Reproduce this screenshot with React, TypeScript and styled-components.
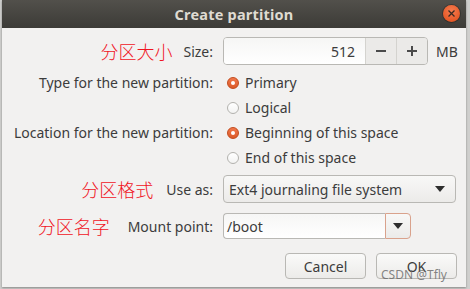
import React from "react";
import styled, { createGlobalStyle } from "styled-components";

const Global = createGlobalStyle`
  html, body {
    margin: 0;
    padding: 0;
    background: #cfcfcd;
  }
  body {
    font-family: "Noto Sans", "Open Sans", sans-serif;
  }
`;

const Screen = styled.div`
  width: 470px;
  height: 289px;
  overflow: hidden;
  padding-left: 2px;
  box-sizing: border-box;
`;

const Dialog = styled.div`
  width: 464px;
  height: 287px;
  background: #f2f1f0;
  display: flex;
  flex-direction: column;
  box-shadow: 0 1px 2px rgba(0, 0, 0, 0.35);
`;

const TitleBar = styled.div`
  position: relative;
  height: 28px;
  flex: none;
  background: linear-gradient(#52504b, #3c3b37);
  display: flex;
  align-items: center;
  justify-content: center;
  color: #dfdbd2;
  font-weight: bold;
  font-size: 14.5px;
  letter-spacing: 0.2px;
`;

const CloseButton = styled.div`
  position: absolute;
  right: 6px;
  top: 5px;
  width: 17px;
  height: 17px;
  border-radius: 50%;
  background: radial-gradient(circle at 50% 35%, #f57c50, #df4a16);
  box-shadow: 0 0 0 1px rgba(0, 0, 0, 0.25);
  display: flex;
  align-items: center;
  justify-content: center;
`;

const Body = styled.div`
  flex: 1;
  display: flex;
  flex-direction: column;
  padding: 9px 10px 0 0;
`;

const Form = styled.div`
  display: grid;
  grid-template-columns: 211px 1fr;
  column-gap: 10px;
`;

const Label = styled.div<{ $h: number; $mt?: number }>`
  height: ${(p) => p.$h}px;
  margin-top: ${(p) => p.$mt || 0}px;
  display: flex;
  align-items: center;
  justify-content: flex-end;
  font-size: 14px;
  color: #3c3c3c;
  white-space: nowrap;
`;

const Note = styled.span<{ $gap: number }>`
  margin-right: ${(p) => p.$gap}px;
  font-family: "Noto Sans CJK SC", sans-serif;
  font-weight: 300;
  font-size: 18px;
  color: #f0141e;
`;

const Cell = styled.div<{ $h: number; $mt?: number }>`
  height: ${(p) => p.$h}px;
  margin-top: ${(p) => p.$mt || 0}px;
  display: flex;
  align-items: center;
`;

const SpinBox = styled.div`
  width: 205px;
  height: 28px;
  box-sizing: border-box;
  border: 1px solid #b9b8b4;
  border-radius: 4px;
  display: flex;
  overflow: hidden;
`;

const SpinText = styled.div`
  flex: 1;
  background: linear-gradient(#f6f6f5, #ffffff);
  display: flex;
  align-items: center;
  justify-content: flex-end;
  padding-right: 10px;
  font-size: 14px;
  color: #3c3c3c;
`;

const SpinBtn = styled.div`
  width: 30px;
  border-left: 1px solid #d4d3cf;
  background: #ebeae8;
  display: flex;
  align-items: center;
  justify-content: center;
`;

const Unit = styled.span`
  margin-left: 8px;
  font-size: 14px;
  color: #3c3c3c;
`;

const Radio = styled.span<{ $on?: boolean }>`
  width: 12px;
  height: 12px;
  margin-left: 4px;
  margin-right: 6px;
  border-radius: 50%;
  box-sizing: border-box;
  display: inline-flex;
  align-items: center;
  justify-content: center;
  border: 1px solid ${(p) => (p.$on ? "#c24a1c" : "#b3b2ae")};
  background: ${(p) =>
    p.$on ? "linear-gradient(#f0774b, #dc5a28)" : "linear-gradient(#ffffff, #f3f3f2)"};
  &::after {
    content: "";
    display: ${(p) => (p.$on ? "block" : "none")};
    width: 4px;
    height: 4px;
    border-radius: 50%;
    background: #ffffff;
  }
`;

const RadioText = styled.span`
  font-size: 14px;
  color: #3c3c3c;
`;

const Combo = styled.div`
  width: 233px;
  height: 28px;
  box-sizing: border-box;
  border: 1px solid #b9b8b4;
  border-radius: 4px;
  background: linear-gradient(#f8f8f7, #ecebe9);
  display: flex;
  align-items: center;
  justify-content: space-between;
  padding: 0 10px 0 5px;
  font-size: 14px;
  color: #3c3c3c;
`;

const Arrow = styled.span`
  width: 0;
  height: 0;
  border-left: 5px solid transparent;
  border-right: 5px solid transparent;
  border-top: 6px solid #2e2e2e;
`;

const EntryCombo = styled.div`
  width: 188px;
  height: 26px;
  display: flex;
`;

const EntryPart = styled.div`
  flex: 1;
  box-sizing: border-box;
  border: 1px solid #b9b8b4;
  border-right: none;
  border-radius: 4px 0 0 4px;
  background: linear-gradient(#f6f6f5, #ffffff);
  display: flex;
  align-items: center;
  padding-left: 3px;
  font-size: 14px;
  color: #3c3c3c;
`;

const EntryBtn = styled.div`
  width: 26px;
  box-sizing: border-box;
  border: 1px solid #d9a28c;
  border-radius: 0 4px 4px 0;
  background: linear-gradient(#f8f8f7, #ecebe9);
  display: flex;
  align-items: center;
  justify-content: center;
`;

const Actions = styled.div`
  display: flex;
  justify-content: flex-end;
  gap: 10px;
  margin-top: 14px;
  margin-right: -1px;
`;

const Button = styled.div`
  position: relative;
  width: 81px;
  height: 26px;
  box-sizing: border-box;
  border: 1px solid #b9b8b4;
  border-radius: 4px;
  background: linear-gradient(#fafaf9, #ecebe9);
  display: flex;
  align-items: center;
  justify-content: center;
  font-size: 14px;
  color: #3c3c3c;
`;

const Watermark = styled.span`
  position: absolute;
  left: 4px;
  top: 12px;
  font-size: 12px;
  color: rgba(110, 110, 110, 0.85);
  white-space: nowrap;
`;

const Minus = () => (
  <svg width="12" height="12" viewBox="0 0 12 12">
    <rect x="1" y="5" width="10" height="2" fill="#4a4a4a" />
  </svg>
);

const Plus = () => (
  <svg width="12" height="12" viewBox="0 0 12 12">
    <rect x="1" y="5" width="10" height="2" fill="#4a4a4a" />
    <rect x="5" y="1" width="2" height="10" fill="#4a4a4a" />
  </svg>
);

const Cross = () => (
  <svg width="9" height="9" viewBox="0 0 9 9">
    <path d="M1.5 1.5 L7.5 7.5 M7.5 1.5 L1.5 7.5" stroke="#3a2a22" strokeWidth="1.3" />
  </svg>
);

export default function App() {
  return (
    <Screen>
      <Global />
      <Dialog>
        <TitleBar>
          Create partition
          <CloseButton>
            <Cross />
          </CloseButton>
        </TitleBar>
        <Body>
          <Form>
            <Label $h={28}>
              <Note $gap={11}>分区大小</Note>
              <span>Size:</span>
            </Label>
            <Cell $h={28}>
              <SpinBox>
                <SpinText>512</SpinText>
                <SpinBtn>
                  <Minus />
                </SpinBtn>
                <SpinBtn>
                  <Plus />
                </SpinBtn>
              </SpinBox>
              <Unit>MB</Unit>
            </Cell>

            <Label $h={25} $mt={5}>Type for the new partition:</Label>
            <Cell $h={25} $mt={5}>
              <Radio $on />
              <RadioText>Primary</RadioText>
            </Cell>
            <Label $h={25} />
            <Cell $h={25}>
              <Radio />
              <RadioText>Logical</RadioText>
            </Cell>

            <Label $h={25}>Location for the new partition:</Label>
            <Cell $h={25}>
              <Radio $on />
              <RadioText>Beginning of this space</RadioText>
            </Cell>
            <Label $h={25} />
            <Cell $h={25}>
              <Radio />
              <RadioText>End of this space</RadioText>
            </Cell>

            <Label $h={28} $mt={5}>
              <Note $gap={13}>分区格式</Note>
              <span>Use as:</span>
            </Label>
            <Cell $h={28} $mt={5}>
              <Combo>
                Ext4 journaling file system
                <Arrow />
              </Combo>
            </Cell>

            <Label $h={26} $mt={10}>
              <Note $gap={18}>分区名字</Note>
              <span>Mount point:</span>
            </Label>
            <Cell $h={26} $mt={10}>
              <EntryCombo>
                <EntryPart>/boot</EntryPart>
                <EntryBtn>
                  <Arrow />
                </EntryBtn>
              </EntryCombo>
            </Cell>
          </Form>
          <Actions>
            <Button>Cancel</Button>
            <Button>
              OK
              <Watermark>CSDN @Tfly</Watermark>
            </Button>
          </Actions>
        </Body>
      </Dialog>
    </Screen>
  );
}
